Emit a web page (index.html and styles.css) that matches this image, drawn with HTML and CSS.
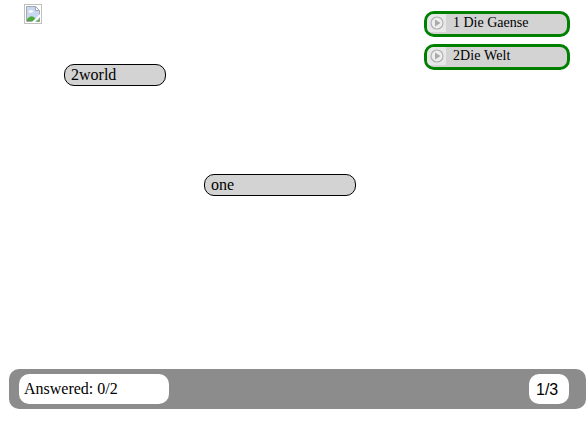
FILE: index.html
```html
<!DOCTYPE html>
<html lang="en">
<head>
<meta charset="utf-8">
<title>Quiz</title>
<link rel="stylesheet" href="styles.css">
</head>
<body>
<main class="stage">
  <svg class="missing" viewBox="0 0 18 20" width="18" height="20">
    <rect x=".5" y=".5" width="17" height="19" fill="#fff" stroke="#c0c0c0"/>
    <path d="M2.5 2.5h9l4 4v11h-13z" fill="#c6d7f5" stroke="#a6a9b0"/>
    <path d="M11.5 2.5v4h4z" fill="#fff" stroke="#a6a9b0"/>
    <ellipse cx="7" cy="7.5" rx="2.5" ry="1.3" fill="#fff"/>
    <path d="M3 17v-2q4-5 8-1l2 3z" fill="#4dab3c"/>
    <path d="M8 18l8-8v3l-5 5z" fill="#fff"/>
    <path d="M12.5 17.5h3v-3z" fill="#4dab3c"/>
  </svg>
  <div class="target target-world">2world</div>
  <div class="target target-one">one</div>
  <div class="answers">
    <div class="answer">
      <svg class="play" viewBox="0 0 19 18" width="19" height="18"><rect width="19" height="18" fill="#e8e8e8"/><circle cx="10" cy="9" r="6" fill="#eee" stroke="#b0b0b0" stroke-width="1.2"/><path d="M8 5.5l5.5 3.5-5.5 3.5z" fill="#aaa"/></svg>
      <span class="label">1 Die Gaense</span>
    </div>
    <div class="answer">
      <svg class="play" viewBox="0 0 19 18" width="19" height="18"><rect width="19" height="18" fill="#e8e8e8"/><circle cx="10" cy="9" r="6" fill="#eee" stroke="#b0b0b0" stroke-width="1.2"/><path d="M8 5.5l5.5 3.5-5.5 3.5z" fill="#aaa"/></svg>
      <span class="label label-wide">2Die Welt</span>
    </div>
  </div>
</main>
<footer class="bar">
  <div class="status">Answered: 0/2</div>
  <div class="page">1/3</div>
</footer>
</body>
</html>
```
FILE: styles.css
```css
* { box-sizing: border-box; }
body {
  margin: 0;
  height: 430px;
  overflow: hidden;
  background: #fff;
  color: #000;
  font: 16px/18px "Liberation Serif", serif;
}
.stage {
  position: relative;
  display: flex;
  justify-content: space-between;
  align-items: flex-start;
  height: 369px;
  padding: 4px 18px 0 24px;
}
.missing { display: block; }
/* drop targets placed freely on the canvas */
.target {
  position: absolute;
  height: 22px;
  padding: 1px 6px;
  border: 1px solid #000;
  border-radius: 10px;
  background: lightgray;
}
.target-world { left: 64px; top: 64px; width: 102px; }
.target-one { left: 204px; top: 174px; width: 152px; }
.answers {
  display: flex;
  flex-direction: column;
  gap: 7px;
  padding-top: 7px;
}
.answer {
  display: flex;
  width: 146px;
  height: 26px;
  overflow: hidden;
  border: 3px solid green;
  border-radius: 10px;
  background: lightgray;
}
.play { display: block; flex: none; }
.label {
  margin-left: 7px;
  font-size: 14px;
  line-height: 18px;
}
.label-wide { letter-spacing: .1px; }
.bar {
  display: flex;
  justify-content: space-between;
  width: 577px;
  height: 40px;
  margin-left: 9px;
  padding: 5px 17px 5px 10px;
  border-radius: 10px;
  background: #8c8c8c;
}
.status, .page {
  height: 30px;
  border-radius: 10px;
  background: #fff;
  line-height: 30px;
}
.status { width: 150px; padding-left: 5px; }
.page {
  width: 40px;
  padding-left: 7px;
  font-family: "Liberation Sans", sans-serif;
  line-height: 32px;
}
```
